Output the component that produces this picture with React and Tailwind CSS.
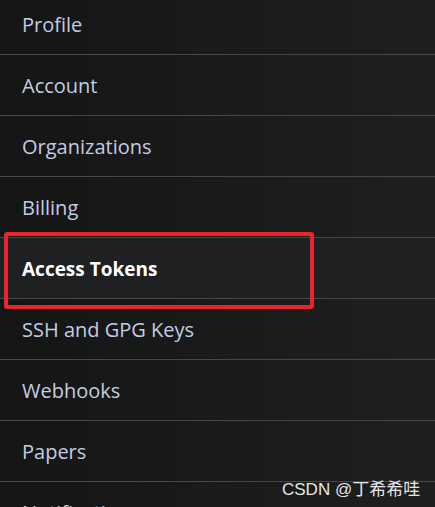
import React from 'react';

const items = [
  'Profile',
  'Account',
  'Organizations',
  'Billing',
  'Access Tokens',
  'SSH and GPG Keys',
  'Webhooks',
  'Papers',
  'Notifications',
];

export default function App() {
  return (
    <div className="relative w-[435px] h-[507px] overflow-hidden bg-gradient-to-r from-[#151515] to-[#1e1f20] font-['Open_Sans','Noto_Sans',sans-serif]">
      <ul className="-mt-[6px]">
        {items.map((item) => {
          const active = item === 'Access Tokens';
          return (
            <li
              key={item}
              className={`h-[61px] flex items-center pl-[22px] pt-[2px] border-b border-[#474747] ${
                active ? 'bg-[#1f2022] text-white font-bold text-[19px]' : 'text-[#c3cde0] text-[20px]'
              }`}
            >
              {item}
            </li>
          );
        })}
      </ul>

      {/* annotation box */}
      <div className="absolute left-[4px] top-[232px] w-[310px] h-[77px] border-[4px] border-[#e8262a] rounded-[3px]"></div>

      {/* watermark */}
      <div className="absolute left-[282px] top-[477px] text-[17px] text-[#e6e6e6] font-['Liberation_Sans','Noto_Sans_CJK_SC',sans-serif]">
        CSDN @丁希希哇
      </div>
    </div>
  );
}
